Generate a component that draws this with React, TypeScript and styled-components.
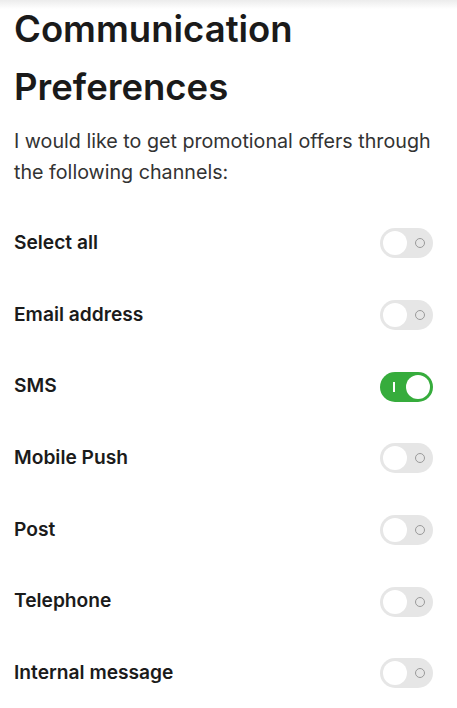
import React, { useState } from 'react';
import styled, { createGlobalStyle } from 'styled-components';

const GlobalStyle = createGlobalStyle`
  html, body {
    margin: 0;
    padding: 0;
    background: #ffffff;
  }
  body {
    font-family: Inter, 'Noto Sans', sans-serif;
    color: #1b1b1b;
  }
`;

const Page = styled.div`
  min-height: 708px;
  background: linear-gradient(to bottom, #ececec 0px, #ffffff 9px);
  padding: 0 14px;
  box-sizing: border-box;
`;

const Title = styled.h1`
  margin: 0;
  padding-top: 0;
  font-size: 36.5px;
  line-height: 58px;
  font-weight: 600;
  color: #1a1a1a;
`;

const Intro = styled.p`
  margin: 10px 0 0;
  font-size: 19.7px;
  line-height: 31px;
  color: #333333;
`;

const List = styled.div`
  display: flex;
  flex-direction: column;
  margin-top: 18px;
`;

const Row = styled.label`
  display: flex;
  align-items: center;
  justify-content: space-between;
  height: 71.7px;
  cursor: pointer;
`;

const Label = styled.span`
  font-size: 19.2px;
  font-weight: 600;
  color: #1b1b1b;
`;

const Track = styled.span<{ on: boolean }>`
  position: relative;
  display: inline-block;
  width: 53px;
  height: 30px;
  margin-right: 10px;
  margin-top: 3px;
  border-radius: 15px;
  background: ${({ on }) => (on ? '#36ac3c' : '#e6e6e6')};
  transition: background 0.2s;
`;

const Knob = styled.span<{ on: boolean }>`
  position: absolute;
  top: 3px;
  left: ${({ on }) => (on ? '26px' : '3px')};
  width: 24px;
  height: 24px;
  border-radius: 50%;
  background: #ffffff;
  transition: left 0.2s;
`;

const OffMark = styled.span`
  position: absolute;
  top: 10px;
  right: 8px;
  width: 10px;
  height: 10px;
  border: 1px solid #9a9a9a;
  border-radius: 50%;
  box-sizing: border-box;
`;

const OnMark = styled.span`
  position: absolute;
  top: 10px;
  left: 13px;
  width: 1.5px;
  height: 10px;
  background: #ffffff;
`;

const HiddenInput = styled.input`
  display: none;
`;

const channels = [
  'Select all',
  'Email address',
  'SMS',
  'Mobile Push',
  'Post',
  'Telephone',
  'Internal message',
];

export default function App() {
  const [state, setState] = useState<Record<string, boolean>>({ SMS: true });
  const toggle = (name: string) => setState((pre) => ({ ...pre, [name]: !pre[name] }));

  return (
    <>
      <GlobalStyle />
      <Page>
        <Title>
          Communication
          <br />
          Preferences
        </Title>
        <Intro>I would like to get promotional offers through the following channels:</Intro>
        <List>
          {channels.map((name) => {
            const on = !!state[name];
            return (
              <Row key={name}>
                <Label>{name}</Label>
                <HiddenInput type="checkbox" checked={on} onChange={() => toggle(name)} />
                <Track on={on}>
                  {on ? <OnMark /> : <OffMark />}
                  <Knob on={on} />
                </Track>
              </Row>
            );
          })}
        </List>
      </Page>
    </>
  );
}
